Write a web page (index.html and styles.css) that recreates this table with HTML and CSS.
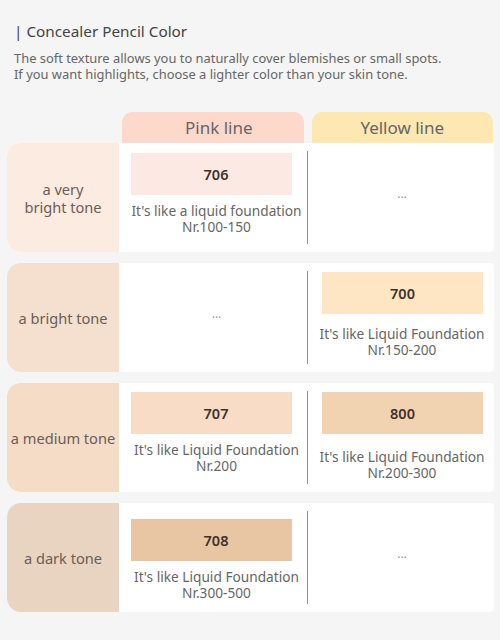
FILE: index.html
```html
<!DOCTYPE html>
<html lang="en">
<head>
<meta charset="utf-8">
<title>Concealer Pencil Color</title>
<link rel="stylesheet" href="styles.css">
</head>
<body>
<div class="page">
  <h1 class="title">| Concealer Pencil Color</h1>
  <p class="desc">The soft texture allows you to naturally cover blemishes or small spots.<br>If you want highlights, choose a lighter color than your skin tone.</p>

  <div class="table">
    <div class="head">
      <div class="spacer"></div>
      <div class="tab tab--pink">Pink line</div>
      <div class="tab tab--yellow">Yellow line</div>
    </div>

    <div class="row row--1">
      <div class="label label--1">a very<br>bright tone</div>
      <div class="cell cell--left">
        <div class="swatch swatch--706">706</div>
        <div class="caption">It's like a liquid foundation<br>Nr.100-150</div>
      </div>
      <div class="cell cell--right cell--empty"><span class="dots">...</span></div>
    </div>

    <div class="row row--2">
      <div class="label label--2">a bright tone</div>
      <div class="cell cell--left cell--empty"><span class="dots">...</span></div>
      <div class="cell cell--right">
        <div class="swatch swatch--700">700</div>
        <div class="caption">It's like Liquid Foundation<br>Nr.150-200</div>
      </div>
    </div>

    <div class="row row--3">
      <div class="label label--3">a medium tone</div>
      <div class="cell cell--left">
        <div class="swatch swatch--707">707</div>
        <div class="caption">It's like Liquid Foundation<br>Nr.200</div>
      </div>
      <div class="cell cell--right">
        <div class="swatch swatch--800">800</div>
        <div class="caption caption--wide">It's like Liquid Foundation<br>Nr.200-300</div>
      </div>
    </div>

    <div class="row row--4">
      <div class="label label--4">a dark tone</div>
      <div class="cell cell--left">
        <div class="swatch swatch--708">708</div>
        <div class="caption">It's like Liquid Foundation<br>Nr.300-500</div>
      </div>
      <div class="cell cell--right cell--empty"><span class="dots">...</span></div>
    </div>
  </div>
</div>
</body>
</html>
```

FILE: styles.css
```css
* { box-sizing: border-box; }

html, body {
  margin: 0;
  padding: 0;
  background: #f5f5f5;
}

body {
  font-family: "Noto Sans", "Open Sans", sans-serif;
  color: #555;
}

.page {
  padding: 20px 6px 0 7px;
}

.title {
  margin: 0 0 0 7px;
  font-size: 15.3px;
  font-weight: 400;
  line-height: 22px;
  color: #444;
}

.desc {
  margin: 8px 0 0 7px;
  font-size: 12.9px;
  line-height: 16px;
  color: #666;
}

.table {
  margin-top: 30px;
  display: flex;
  flex-direction: column;
  gap: 11px;
}

.head,
.row {
  display: grid;
  grid-template-columns: 112px minmax(0, 1fr) minmax(0, 1fr);
}

.head {
  height: 31px;
  margin-bottom: -11px;
}

.tab {
  border-radius: 10px 10px 0 0;
  font-size: 17px;
  line-height: 31px;
  text-align: center;
  color: #666;
}

.tab--pink {
  background: #fdd9cc;
  margin: 0 3px 0 3px;
  padding-left: 12px;
}

.tab--yellow {
  background: #fde8b2;
  margin: 0 1px 0 5px;
}

.row {
  height: 109px;
  background: #fff;
  border-radius: 14px 4px 4px 14px;
}

.label {
  display: flex;
  align-items: center;
  justify-content: center;
  text-align: center;
  border-radius: 14px 0 0 14px;
  font-size: 14.6px;
  line-height: 18px;
  color: #6a5e57;
}

.label--1 { background: #fcebe0; }
.label--2 { background: #f5e0cf; }
.label--3 { background: #f4dcc7; }
.label--4 { background: #e8d4c0; }

.cell {
  display: flex;
  flex-direction: column;
  align-items: center;
  justify-content: flex-start;
  margin: 8px 0;
  padding-top: 1px;
}

.row--1 .cell { padding-top: 2px; }
.row--4 .cell { padding-top: 8px; }

.cell--left {
  padding-left: 12px;
  padding-right: 4.5px;
}

.cell--right {
  border-left: 1px solid #8e8e8e;
  padding-left: 14.5px;
  padding-right: 12px;
}

.cell.cell--empty {
  justify-content: center;
  padding-top: 0;
}

.swatch {
  align-self: flex-start;
  width: 161px;
  height: 42px;
  flex: none;
  display: flex;
  align-items: center;
  justify-content: center;
  font-size: 14.5px;
  font-weight: 600;
  color: #3e312a;
}

.cell--left .swatch {
  padding-left: 9px;
}

.swatch--706 { background: #fde9e4; }
.swatch--700 { background: #fee6c4; }
.swatch--707 { background: #f8dcc6; }
.swatch--800 { background: #f2d3b1; }
.swatch--708 { background: #e8c6a3; }

.caption {
  margin-top: 8px;
  font-size: 13.7px;
  line-height: 16px;
  text-align: center;
  color: #666;
  white-space: nowrap;
}

.cell--right .caption {
  margin-top: 12px;
}

.cell--right .caption--wide {
  margin-top: 15px;
}

.dots {
  font-size: 12px;
  line-height: 12px;
  color: #999;
  margin-top: -8px;
}
```
